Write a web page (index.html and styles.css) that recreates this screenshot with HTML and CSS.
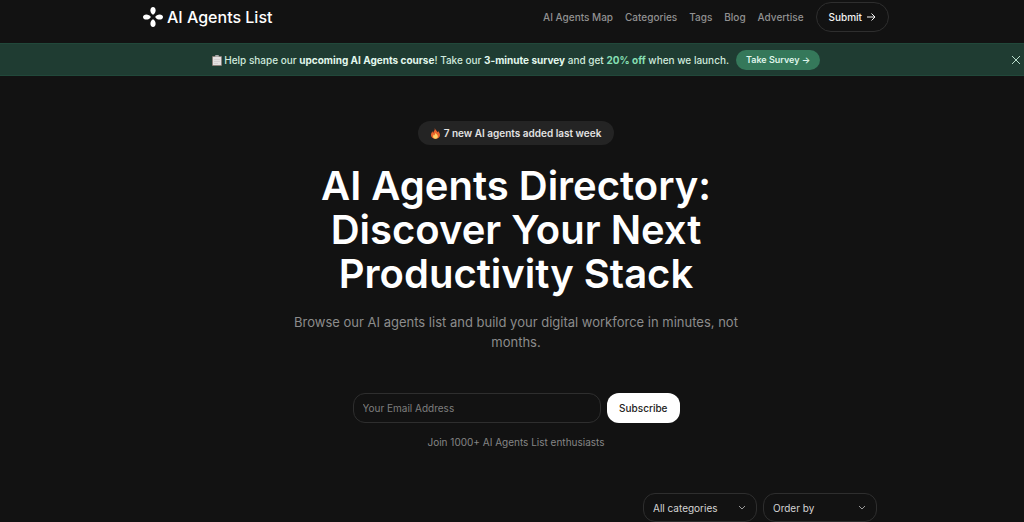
FILE: index.html
```html
<!DOCTYPE html>
<html lang="en">
<head>
  <meta charset="UTF-8">
  <meta name="viewport" content="width=device-width, initial-scale=1.0">
  <title>AI Agents List</title>
  <link rel="stylesheet" href="styles.css">
</head>
<body>

  <header class="header">
    <a class="logo" href="#">
      <svg class="logo-mark" viewBox="0 0 20 20" fill="currentColor" aria-hidden="true">
        <path d="M10 0c1.700 0 2.600 1.500 2.600 3.300 0 1.900-1 3.900-2.600 4.500-1.600-.6-2.600-2.600-2.600-4.500C7.400 1.500 8.300 0 10 0z"/>
        <path d="M10 20c1.700 0 2.600-1.500 2.600-3.300 0-1.900-1-3.900-2.600-4.500-1.600.6-2.600 2.600-2.600 4.500 0 1.800.9 3.300 2.600 3.300z"/>
        <path d="M0 10c0-1.700 1.500-2.600 3.300-2.600 1.900 0 3.900 1 4.500 2.600-.6 1.600-2.600 2.600-4.500 2.600C1.500 12.600 0 11.700 0 10z"/>
        <path d="M20 10c0-1.700-1.500-2.600-3.300-2.600-1.900 0-3.900 1-4.500 2.600.6 1.600 2.600 2.600 4.500 2.600 1.800 0 3.300-.9 3.300-2.600z"/>
      </svg>
      <span>AI Agents List</span>
    </a>
    <nav class="nav">
      <a href="#">AI Agents Map</a>
      <a href="#">Categories</a>
      <a href="#">Tags</a>
      <a href="#">Blog</a>
      <a href="#">Advertise</a>
      <a class="submit" href="#">
        Submit
        <svg class="arrow" viewBox="0 0 10 10" aria-hidden="true"><path d="M1 5h8M5.500 1.500L9 5 5.500 8.500"/></svg>
      </a>
    </nav>
  </header>

  <div class="banner">
    <p class="banner-text">
      <svg class="clipboard" viewBox="0 0 10 11" aria-hidden="true">
        <rect x="0" y="1" width="10" height="10" rx="1" fill="#8b7f78"/>
        <rect x="1" y="2" width="8" height="8" fill="#e4e0e0"/>
        <rect x="3" y="0" width="4" height="2" rx="1" fill="#a9a9a9"/>
        <path d="M2 4.500h6M2 6.500h6M2 8.500h4" stroke="#c4bfc0" stroke-width=".5"/>
      </svg>
      Help shape our <strong>upcoming AI Agents course</strong>! Take our <strong>3-minute survey</strong> and get <strong class="discount">20% off</strong> when we launch.
    </p>
    <a class="survey" href="#">Take Survey →</a>
    <button class="close" type="button" aria-label="Close">
      <svg viewBox="0 0 10 10" aria-hidden="true"><path d="M1 1l8 8M9 1L1 9"/></svg>
    </button>
  </div>

  <main>
    <section class="hero">
      <p class="badge">
        <svg class="flame" viewBox="0 0 10 12" aria-hidden="true">
          <path d="M4.200 0c.4 2 2.500 2.900 3 4.700.4-.4.600-.9.600-1.500C9.200 4.600 10 6 10 7.700 10 10.200 7.900 12 5 12S0 10.300 0 7.800c0-1.700.8-3 1.800-4.200 0 .8.200 1.400.6 1.800C2.800 3.700 4.700 2.500 4.200 0z" fill="#e9632c"/>
          <path d="M5 4.800c.2 1.500 2.600 2.500 2.600 4.500 0 1.500-1.100 2.500-2.600 2.500s-2.700-1-2.700-2.500c0-1 .5-1.700 1-2.200.1.500.3.800.6 1C4.100 6.900 5.100 6.100 5 4.800z" fill="#ffd268"/>
        </svg>
        7 new AI agents added last week
      </p>
      <h1>AI Agents Directory: Discover Your Next Productivity Stack</h1>
      <p class="lead">Browse our AI agents list and build your digital workforce in minutes, not months.</p>

      <form class="signup">
        <input type="email" placeholder="Your Email Address" aria-label="Your Email Address">
        <button type="submit">Subscribe</button>
      </form>
      <p class="note">Join 1000+ AI Agents List enthusiasts</p>
    </section>

    <div class="filters">
      <select aria-label="Category">
        <option>All categories</option>
      </select>
      <select aria-label="Order by">
        <option>Order by</option>
      </select>
    </div>
  </main>

</body>
</html>
```

FILE: styles.css
```css
* {
  box-sizing: border-box;
}

body {
  margin: 0;
  background: #121212;
  color: #fff;
  font-family: Inter, "Liberation Sans", sans-serif;
  font-size: 10px;
  line-height: 16px;
}

p, h1 {
  margin: 0;
}

a {
  color: inherit;
  text-decoration: none;
}

button, input, select {
  font: inherit;
}

.header {
  display: flex;
  align-items: center;
  justify-content: space-between;
  padding: 2px 135px 11px 143px;
}

.logo {
  display: flex;
  align-items: center;
  gap: 4px;
  font-size: 16px;
  font-weight: 500;
}

.logo-mark {
  width: 20px;
  height: 20px;
}

.nav {
  display: flex;
  align-items: center;
  gap: 12px;
  color: #919191;
  font-weight: 500;
}

.submit {
  display: flex;
  align-items: center;
  gap: 4px;
  padding: 6px 12px;
  border: 1px solid #2e2e2e;
  border-radius: 15px;
  color: #f2f2f2;
}

.arrow {
  width: 10px;
  height: 10px;
  fill: none;
  stroke: currentColor;
}

.banner {
  position: relative;
  display: flex;
  align-items: center;
  justify-content: center;
  gap: 7px;
  padding: 6px 0 5px 8px;
  background: #1f3c32;
  border-top: 1px solid #21483a;
  border-bottom: 1px solid #21483a;
  color: #cfeadd;
  font-weight: 500;
}

.banner strong {
  color: #e2f8ed;
  font-weight: 700;
}

.banner .discount {
  color: #86dfb2;
}

.clipboard {
  width: 10px;
  height: 11px;
  vertical-align: -2px;
}

.survey {
  padding: 2px 10px;
  border-radius: 10px;
  background: #35785a;
  color: #dff5ea;
  font-size: 9px;
  font-weight: 600;
}

.close {
  position: absolute;
  right: 3px;
  top: 11px;
  display: flex;
  padding: 0;
  border: 0;
  background: none;
  color: #b9ddcb;
  cursor: pointer;
}

.close svg {
  width: 10px;
  height: 10px;
  fill: none;
  stroke: currentColor;
}

.hero {
  display: flex;
  flex-direction: column;
  align-items: center;
  padding: 45px 0 0 8px;
  text-align: center;
}

.badge {
  display: flex;
  align-items: center;
  gap: 4px;
  padding: 4px 13px;
  border-radius: 12px;
  background: #242424;
  color: #e2e2e2;
  font-weight: 600;
}

.flame {
  width: 9px;
  height: 11px;
}

h1 {
  max-width: 430px;
  margin-top: 19px;
  font-size: 40px;
  font-weight: 600;
  line-height: 44px;
}

.lead {
  max-width: 470px;
  margin-top: 16px;
  color: #8c8c8c;
  font-size: 13px;
  line-height: 20px;
}

.signup {
  display: flex;
  gap: 6px;
  width: 327px;
  margin-top: 41px;
}

.signup input {
  flex: 1;
  min-width: 0;
  padding: 6px 9px;
  border: 1px solid #2e2e2e;
  border-radius: 12px;
  background: transparent;
  color: #fff;
}

.signup input::placeholder {
  color: #7e7e7e;
}

.signup button {
  padding: 7px 12px;
  border: 0;
  border-radius: 12px;
  background: #fff;
  color: #222;
  font-weight: 500;
}

.note {
  margin-top: 11px;
  color: #858585;
}

.filters {
  display: flex;
  justify-content: flex-end;
  gap: 6px;
  padding: 43px 147px 0 0;
}

.filters select {
  width: 114px;
  height: 29px;
  padding: 0 9px;
  border: 1px solid #2e2e2e;
  border-radius: 12px;
  appearance: none;
  background: url("data:image/svg+xml,%3Csvg xmlns='http://www.w3.org/2000/svg' viewBox='0 0 8 6' fill='none' stroke='%23999'%3E%3Cpath d='M1 1l3 3 3-3'/%3E%3C/svg%3E") no-repeat right 10px center / 8px 6px;
  color: #d4d4d4;
}
```
